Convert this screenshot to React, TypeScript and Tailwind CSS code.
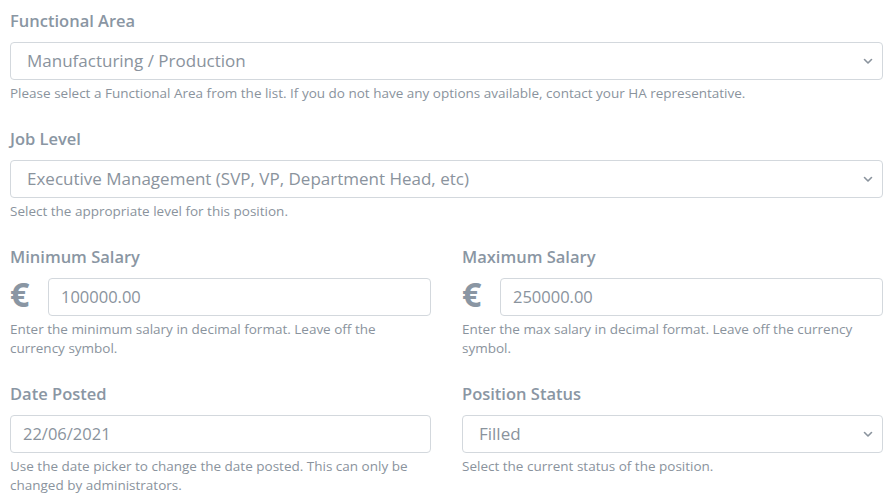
import React from 'react'

const font = { fontFamily: '"Open Sans", "Liberation Sans", sans-serif' }

function Chevron() {
  return (
    <svg width="10" height="7" viewBox="0 0 10 7" className="shrink-0">
      <path d="M1.5 1.5 L5 5 L8.5 1.5" fill="none" stroke="#8a939d" strokeWidth="1.6" strokeLinecap="round" strokeLinejoin="round" />
    </svg>
  )
}

function Label({ children }: { children: React.ReactNode }) {
  return <div className="h-6 leading-6 text-[16.5px] font-semibold text-[#8a96a3] mb-[9px]">{children}</div>
}

function Help({ children }: { children: React.ReactNode }) {
  return <div className="mt-[4px] text-[13.5px] leading-[19px] text-[#8a939d]">{children}</div>
}

function Select({ value }: { value: string }) {
  return (
    <div className="h-[38px] border border-[#d3d8dd] rounded-[4px] flex items-center justify-between pl-4 pr-[9px] bg-white">
      <span className="text-[17px] text-[#8a939d]">{value}</span>
      <Chevron />
    </div>
  )
}

function Input({ value }: { value: string }) {
  return (
    <div className="h-[38px] flex-1 border border-[#d3d8dd] rounded-[4px] flex items-center pl-3 bg-white">
      <span className="text-[16.5px] text-[#8a939d]">{value}</span>
    </div>
  )
}

function Salary({ label, value, help }: { label: string; value: string; help: string }) {
  return (
    <div>
      <Label>{label}</Label>
      <div className="flex items-center">
        <span className="w-[38px] text-[34px] font-bold leading-none text-[#8a96a3] -mt-[6px]">€</span>
        <Input value={value} />
      </div>
      <Help>{help}</Help>
    </div>
  )
}

export default function App() {
  return (
    <div className="w-[895px] h-[498px] bg-white pl-[10px] pr-[12px] pt-[9px] overflow-hidden" style={font}>
      <div className="mb-[24px]">
        <Label>Functional Area</Label>
        <Select value="Manufacturing / Production" />
        <Help>Please select a Functional Area from the list. If you do not have any options available, contact your HA representative.</Help>
      </div>
      <div className="mb-[24px]">
        <Label>Job Level</Label>
        <Select value="Executive Management (SVP, VP, Department Head, etc)" />
        <Help>Select the appropriate level for this position.</Help>
      </div>
      <div className="grid grid-cols-2 gap-x-[31px] gap-y-[24px]">
        <Salary label="Minimum Salary" value="100000.00" help="Enter the minimum salary in decimal format. Leave off the currency symbol." />
        <Salary label="Maximum Salary" value="250000.00" help="Enter the max salary in decimal format. Leave off the currency symbol." />
        <div>
          <Label>Date Posted</Label>
          <Input value="22/06/2021" />
          <Help>Use the date picker to change the date posted. This can only be changed by administrators.</Help>
        </div>
        <div>
          <Label>Position Status</Label>
          <Select value="Filled" />
          <Help>Select the current status of the position.</Help>
        </div>
      </div>
    </div>
  )
}
